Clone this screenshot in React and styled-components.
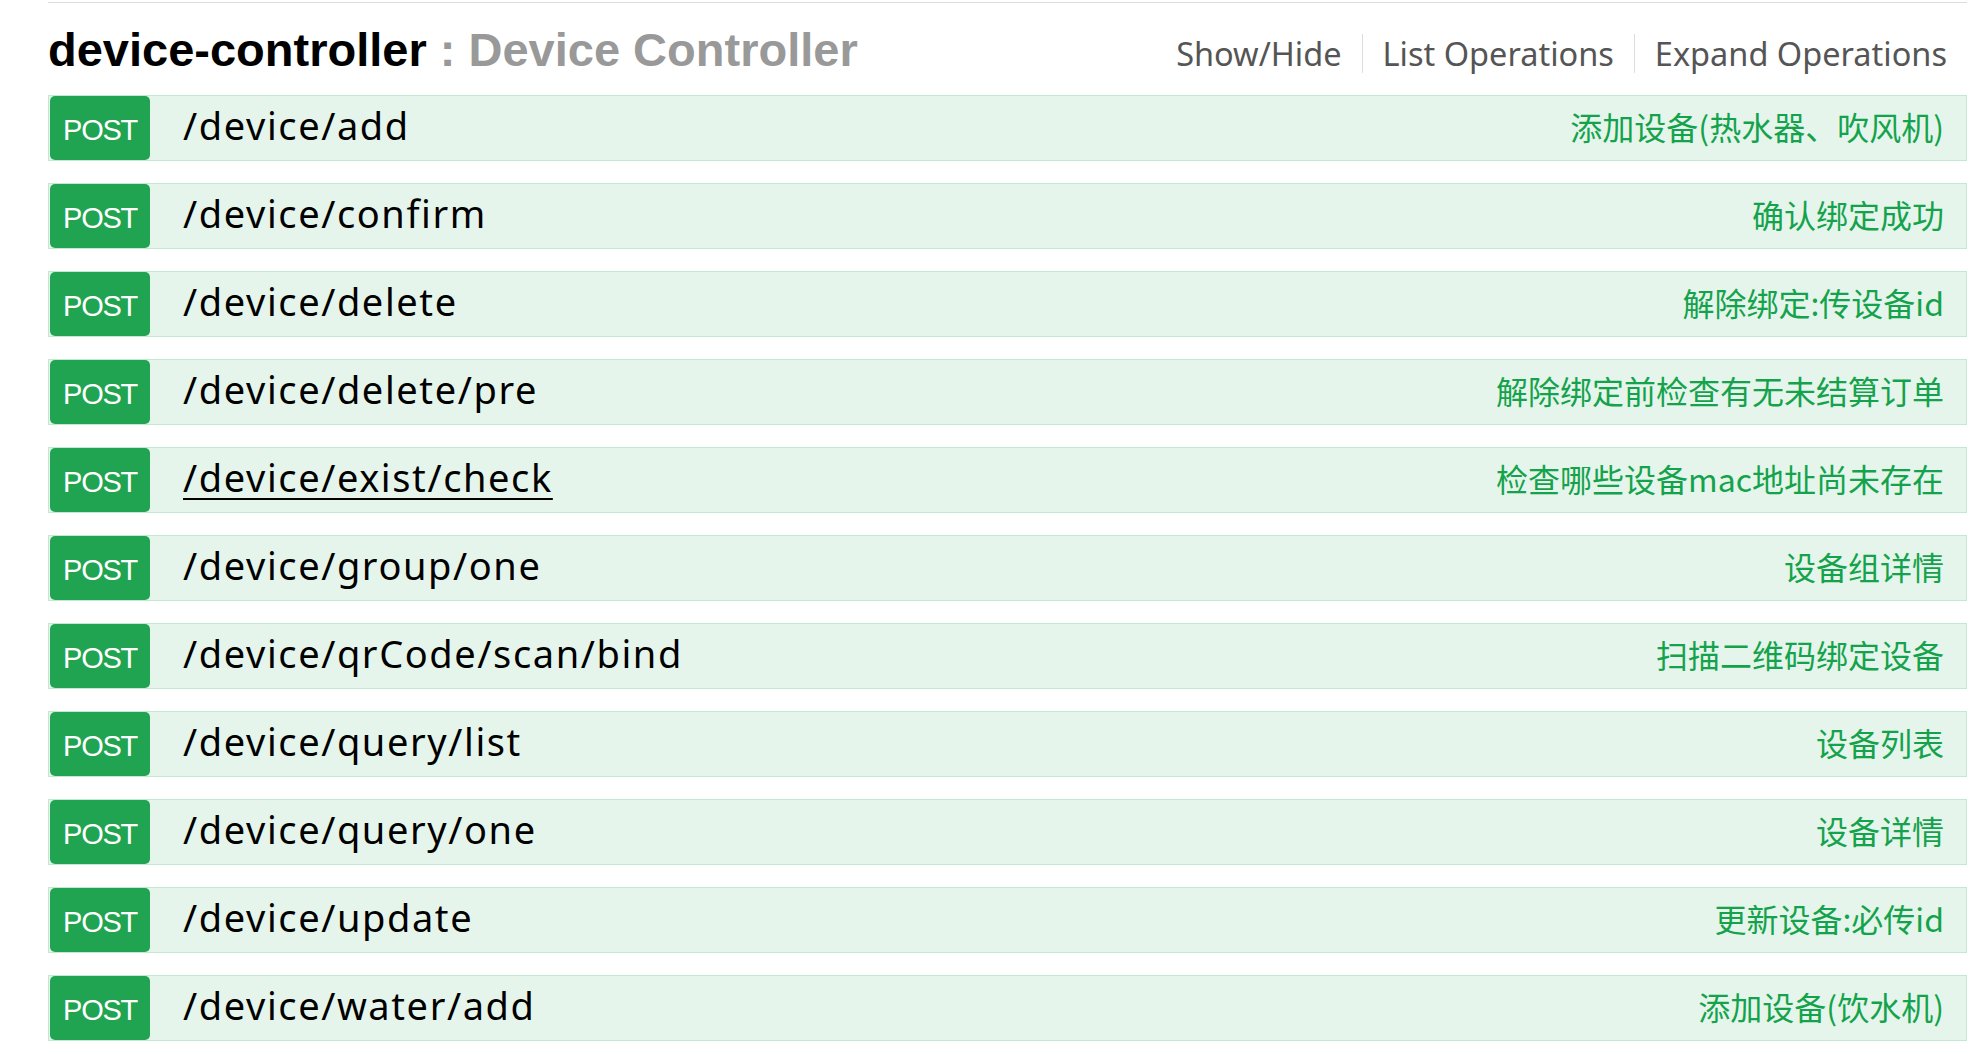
import React from 'react';
import styled, { createGlobalStyle } from 'styled-components';

const GlobalStyle = createGlobalStyle`
  html, body {
    margin: 0;
    padding: 0;
    background: #fff;
  }
  body {
    font-family: "Noto Sans", "Noto Sans CJK SC", sans-serif;
  }
`;

const Resource = styled.div`
  margin: 2px 11px 0 48px;
  border-top: 1px solid #dddddd;
`;

const Heading = styled.div`
  height: 92px;
  display: flex;
  align-items: center;
  justify-content: space-between;
`;

const Title = styled.h2`
  margin: 0;
  font-family: "Liberation Sans", Arial, sans-serif;
  font-weight: bold;
  font-size: 47px;
  color: #000;
  white-space: nowrap;

  span {
    color: #999999;
  }
`;

const Options = styled.ul`
  list-style: none;
  margin: 0;
  padding: 8px 0 0;
  display: flex;
`;

const Option = styled.li`
  padding: 0 20px;
  line-height: 39px;
  font-size: 32.5px;
  color: #555555;
  border-right: 1px solid #dddddd;

  &:last-child {
    border-right: none;
  }
`;

const Operations = styled.ul`
  list-style: none;
  margin: 0;
  padding: 0;
`;

const Operation = styled.li`
  height: 66px;
  box-sizing: border-box;
  margin-bottom: 22px;
  display: flex;
  align-items: center;
  background: #e6f5eb;
  border: 1px solid #c3e8d1;
`;

const Method = styled.span`
  flex: none;
  width: 100px;
  height: 64px;
  box-sizing: border-box;
  padding-top: 4px;
  margin-left: 1px;
  display: flex;
  align-items: center;
  justify-content: center;
  background: #20a451;
  border-radius: 5px;
  color: #fff;
  font-family: "Liberation Sans", Arial, sans-serif;
  font-size: 29px;
  letter-spacing: -1.3px;
`;

const Path = styled.span`
  margin-left: 33px;
  padding-bottom: 7px;
  font-size: 38px;
  letter-spacing: 1.6px;
  color: #000;
  text-decoration: ${p => (p.$hover ? 'underline' : 'none')};
  text-decoration-thickness: 2px;
  text-underline-offset: 6px;
  white-space: nowrap;
`;

const Summary = styled.span`
  margin-left: auto;
  padding: 0 22px 4px 0;
  font-family: "Noto Sans CJK SC", "Noto Sans", sans-serif;
  font-size: 32px;
  color: #14a34c;
  white-space: nowrap;
`;

const operations = [
  { path: '/device/add', summary: '添加设备(热水器、吹风机)' },
  { path: '/device/confirm', summary: '确认绑定成功' },
  { path: '/device/delete', summary: '解除绑定:传设备id' },
  { path: '/device/delete/pre', summary: '解除绑定前检查有无未结算订单' },
  { path: '/device/exist/check', summary: '检查哪些设备mac地址尚未存在', hover: true },
  { path: '/device/group/one', summary: '设备组详情' },
  { path: '/device/qrCode/scan/bind', summary: '扫描二维码绑定设备' },
  { path: '/device/query/list', summary: '设备列表' },
  { path: '/device/query/one', summary: '设备详情' },
  { path: '/device/update', summary: '更新设备:必传id' },
  { path: '/device/water/add', summary: '添加设备(饮水机)' },
];

export default function App() {
  return (
    <>
      <GlobalStyle />
      <Resource>
        <Heading>
          <Title>
            device-controller <span>: Device Controller</span>
          </Title>
          <Options>
            <Option>Show/Hide</Option>
            <Option>List Operations</Option>
            <Option>Expand Operations</Option>
          </Options>
        </Heading>
        <Operations>
          {operations.map(op => (
            <Operation key={op.path}>
              <Method>POST</Method>
              <Path $hover={op.hover}>{op.path}</Path>
              <Summary>{op.summary}</Summary>
            </Operation>
          ))}
        </Operations>
      </Resource>
    </>
  );
}
